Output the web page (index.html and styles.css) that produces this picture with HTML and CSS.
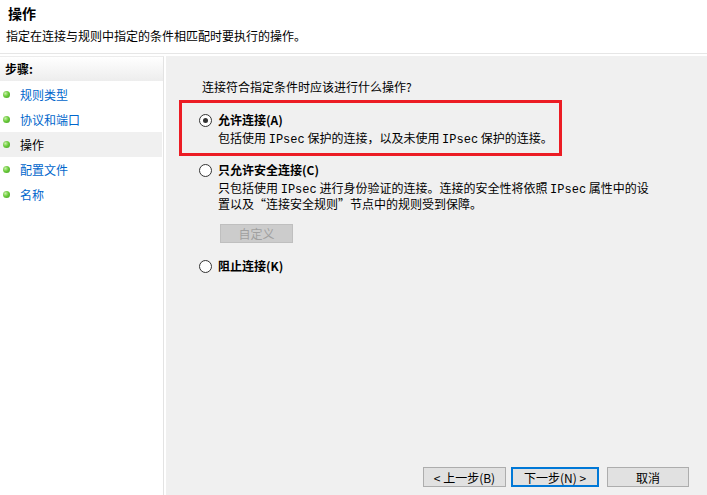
FILE: index.html
```html
<!DOCTYPE html>
<html lang="zh-CN">
<head>
  <meta charset="UTF-8">
  <title>操作</title>
  <link rel="stylesheet" href="styles.css">
</head>
<body>
  <div class="wizard">
    <!-- header -->
    <div class="header">
      <h1 class="title">操作</h1>
      <p class="subtitle">指定在连接与规则中指定的条件相匹配时要执行的操作。</p>
    </div>

    <div class="content">
      <!-- steps -->
      <div class="steps">
        <div class="steps-head">步骤:</div>
        <ul class="step-list">
          <li class="step"><span class="dot"></span><a href="#">规则类型</a></li>
          <li class="step"><span class="dot"></span><a href="#">协议和端口</a></li>
          <li class="step current"><span class="dot"></span><span>操作</span></li>
          <li class="step"><span class="dot"></span><a href="#">配置文件</a></li>
          <li class="step"><span class="dot"></span><a href="#">名称</a></li>
        </ul>
      </div>

      <!-- page -->
      <div class="page">
        <p class="question">连接符合指定条件时应该进行什么操作?</p>

        <div class="option first highlight">
          <label class="opt-label"><span class="radio checked"></span>允许连接(A)</label>
          <p class="desc">包括使用 <span class="mono">IPsec</span> 保护的连接，以及未使用 <span class="mono">IPsec</span> 保护的连接。</p>
        </div>

        <div class="option second">
          <label class="opt-label"><span class="radio"></span>只允许安全连接(C)</label>
          <p class="desc">只包括使用 <span class="mono">IPsec</span> 进行身份验证的连接。连接的安全性将依照 <span class="mono">IPsec</span> 属性中的设<br>置以及“连接安全规则”节点中的规则受到保障。</p>
          <button class="btn-custom" disabled>自定义</button>
        </div>

        <div class="option third">
          <label class="opt-label"><span class="radio"></span>阻止连接(K)</label>
        </div>

        <div class="footer">
          <button class="btn">&lt; 上一步(B)</button>
          <button class="btn default">下一步(N) &gt;</button>
          <button class="btn cancel">取消</button>
        </div>
      </div>
    </div>
  </div>
</body>
</html>
```

FILE: styles.css
```css
/* wizard page */
body {
  margin: 0;
  background: #fff;
  font-family: "Noto Sans CJK SC", "Liberation Sans", sans-serif;
  font-size: 12px;
  color: #000;
}
.wizard {
  width: 707px;
  height: 495px;
  display: flex;
  flex-direction: column;
}
.header {
  height: 54px;
  border-bottom: 1px solid #e6e6e6;
  box-sizing: border-box;
  padding: 3px 0 0 6px;
}
.title {
  margin: 0 0 0 2px;
  font-size: 14px;
  font-weight: bold;
  line-height: 20px;
}
.subtitle {
  margin: 5px 0 0;
  line-height: 16px;
}
.content {
  flex: 1;
  display: flex;
  margin-top: 2px;
}
.steps {
  width: 163px;
  border-right: 1px solid #e3e3e3;
  border-top: 1px solid #ececec;
}
.steps-head {
  height: 24px;
  line-height: 24px;
  padding-left: 5px;
  font-weight: bold;
  background: linear-gradient(#ffffff, #ededed);
}
.step-list {
  list-style: none;
  margin: 1px 0 0;
  padding: 0;
}
.step {
  height: 25px;
  display: flex;
  align-items: center;
  margin-right: 1px;
}
.step a {
  color: #0066cc;
  text-decoration: none;
}
.step.current {
  background: #f0f0f0;
}
.dot {
  width: 7px;
  height: 7px;
  border-radius: 50%;
  margin: 0 10px 0 3px;
  background: radial-gradient(circle at 35% 35%, #c8f0a8 0, #6ccb3c 45%, #3d9d1e 100%);
}
.page {
  flex: 1;
  margin-left: 2px;
  background: #f0f0f0;
  display: flex;
  flex-direction: column;
  padding-left: 13px;
}
.question {
  margin: 23px 0 0 23px;
  line-height: 16px;
}
.option {
  border: 3px solid transparent;
  width: 359px;
  padding: 0 0 0 18px;
}
.option.highlight {
  border-color: #ec1c24;
}
.option.first {
  margin-top: 5px;
  padding-top: 9px;
  padding-bottom: 6px;
}
.option.second {
  border-top-width: 0;
  padding-top: 6px;
}
.option.third {
  border-top-width: 0;
  margin-top: 12px;
}
.opt-label {
  display: flex;
  align-items: center;
  font-weight: bold;
  line-height: 16px;
  margin-left: -1px;
}
.radio {
  width: 11px;
  height: 11px;
  border: 1px solid #333;
  border-radius: 50%;
  background: #fff;
  margin-right: 6px;
  position: relative;
}
.radio.checked::after {
  content: "";
  position: absolute;
  left: 3px;
  top: 3px;
  width: 5px;
  height: 5px;
  border-radius: 50%;
  background: #333;
}
.desc {
  margin: 3px 0 0 18px;
  line-height: 14px;
  white-space: nowrap;
}
.mono {
  font-family: "Liberation Mono", monospace;
  font-size: 12px;
}
.btn-custom {
  display: block;
  margin-top: 13px;
  margin-left: 20px;
  width: 73px;
  height: 19px;
  padding: 0;
  font: inherit;
  color: #a0a0a0;
  background: #cccccc;
  border: 1px solid #bfbfbf;
}
.footer {
  margin-top: auto;
  display: flex;
  justify-content: flex-end;
  padding: 0 18px 8px 0;
  gap: 5px;
}
.btn {
  height: 20px;
  padding: 0;
  font: inherit;
  background: #e1e1e1;
  border: 1px solid #adadad;
  width: 83px;
}
.btn.default {
  width: 88px;
  border: 2px solid #0078d7;
}
.btn.cancel {
  width: 82px;
  margin-left: 3px;
}
```
